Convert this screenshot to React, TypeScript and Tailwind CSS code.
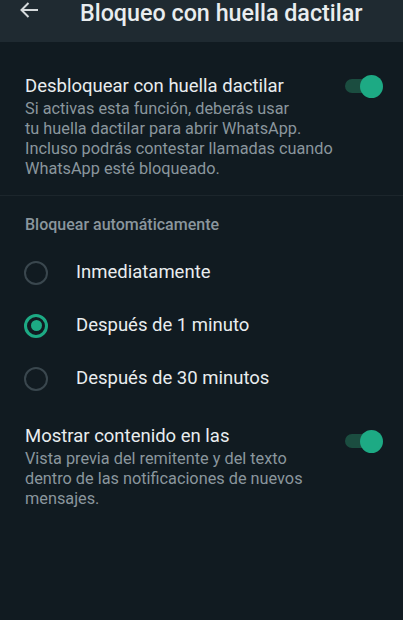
import React, { useState } from 'react';

function Toggle({ on }: { on: boolean }) {
    return (
        <div className="relative w-[38px] h-[24px] flex items-center shrink-0">
            <div className="absolute left-0 w-[30px] h-[14px] rounded-full bg-[#1b4d40]"></div>
            <div className={`absolute right-0 w-[23px] h-[23px] rounded-full ${on ? 'bg-[#1daa84]' : 'bg-[#8696a0]'}`}></div>
        </div>
    );
}

function Radio({ checked }: { checked: boolean }) {
    return checked ? (
        <div className="w-[24px] h-[24px] rounded-full border-[3px] border-[#1daa84] flex items-center justify-center shrink-0">
            <div className="w-[11px] h-[11px] rounded-full bg-[#1daa84]"></div>
        </div>
    ) : (
        <div className="w-[24px] h-[24px] rounded-full border-2 border-[#3a474e] shrink-0"></div>
    );
}

export default function App() {
    const [choice, setChoice] = useState(1);
    const options = ['Inmediatamente', 'Después de 1 minuto', 'Después de 30 minutos'];

    return (
        <div className="w-[403px] h-[620px] bg-[#111b21] overflow-hidden" style={{ fontFamily: 'Roboto, "Noto Sans", sans-serif' }}>
            {/* Header */}
            <div className="h-[42px] bg-[#1f2a31] flex items-start">
                <svg width="20" height="18" viewBox="0 0 20 18" className="ml-[19px] mt-[1px]" fill="none" stroke="#d5dadc" strokeWidth="2">
                    <path d="M19 9H2.5M9.5 2L2.5 9l7 7" />
                </svg>
                <h1 className="ml-[41px] text-[23.3px] leading-[26px] font-medium text-[#e9edef]">Bloqueo con huella dactilar</h1>
            </div>

            {/* Fingerprint unlock */}
            <div className="pt-[32px] pb-[16px] pl-[25px] pr-[20px] flex items-start border-b border-[#1c262c]">
                <div className="flex-1">
                    <div className="text-[18.5px] leading-[24px] text-[#e9edef]">Desbloquear con huella dactilar</div>
                    <div className="text-[16.3px] leading-[20px] text-[#8a969d] mt-[1px]">
                        Si activas esta función, deberás usar<br />
                        tu huella dactilar para abrir WhatsApp.<br />
                        Incluso podrás contestar llamadas cuando<br />
                        WhatsApp esté bloqueado.
                    </div>
                </div>
                <Toggle on />
            </div>

            {/* Auto lock */}
            <div className="pt-[19px]">
                <div className="pl-[25px] text-[16px] leading-[20px] font-medium text-[#8a969d]">Bloquear automáticamente</div>
                <div className="mt-[11px]">
                    {options.map((o, i) => (
                        <div key={o} onClick={() => setChoice(i)} className="h-[53px] flex items-center pl-[24px] cursor-pointer">
                            <Radio checked={choice === i} />
                            <span className="ml-[28px] text-[18.5px] text-[#e9edef]">{o}</span>
                        </div>
                    ))}
                </div>
            </div>

            {/* Notification content */}
            <div className="pt-[19px] pl-[25px] pr-[20px] flex items-start">
                <div className="flex-1">
                    <div className="text-[18.5px] leading-[24px] text-[#e9edef]">Mostrar contenido en las</div>
                    <div className="text-[16.3px] leading-[20px] text-[#8a969d] mt-[1px]">
                        Vista previa del remitente y del texto<br />
                        dentro de las notificaciones de nuevos<br />
                        mensajes.
                    </div>
                </div>
                <div className="mt-[5px]"><Toggle on /></div>
            </div>
        </div>
    );
}
